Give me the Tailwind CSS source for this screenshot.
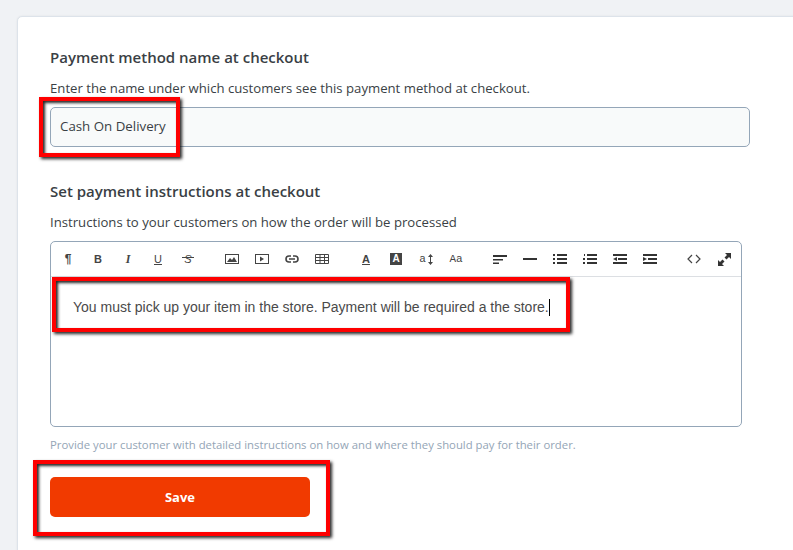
<!DOCTYPE html>
<html>
<head>
  <meta charset="UTF-8">
  <meta name="viewport" content="width=device-width, initial-scale=1.0">
  <script src="https://cdn.jsdelivr.net/npm/@tailwindcss/browser@4"></script>
</head>
<body class="bg-[#f0f2f5] h-[550px] overflow-hidden relative font-['Open_Sans',sans-serif]">
  <div class="pt-[16px] pl-[17px]">
    <!-- Card -->
    <div class="bg-white border border-[#dde3ea] rounded-tl-[5px] w-[800px] h-[560px] pl-[32px] pt-[30px] text-[#3a3f45] shadow-[0_0_2px_rgba(0,0,0,0.08)]">
      <h2 class="text-[15px] leading-[20px] font-semibold">Payment method name at checkout</h2>
      <p class="text-[13.16px] leading-[18px] mt-[12px]">Enter the name under which customers see this payment method at checkout.</p>
      <div class="mt-[10px] w-[700px] h-[40px] bg-[#f8fafa] border border-[#94a6b8] rounded-[5px] pl-[9px] flex items-center text-[13.3px]">Cash On Delivery</div>

      <h2 class="text-[15px] leading-[20px] font-semibold mt-[34px]">Set payment instructions at checkout</h2>
      <p class="text-[13.16px] leading-[18px] mt-[12px]">Instructions to your customers on how the order will be processed</p>

      <!-- Editor -->
      <div class="mt-[10px] w-[692px] h-[186px] border border-[#94a6b8] rounded-[5px] overflow-hidden">
        <div class="h-[35px] border-b border-[#dcdfe3] pl-[2px] flex items-center text-[#444] font-['Liberation_Sans',sans-serif] text-[11px]">
          <span class="w-[30px] text-center font-bold text-[12px]">¶</span>
          <span class="w-[30px] text-center font-bold">B</span>
          <span class="w-[30px] text-center font-bold italic font-['Liberation_Serif',serif] text-[12px]">I</span>
          <span class="w-[30px] text-center underline">U</span>
          <span class="w-[30px] flex justify-center"><span class="relative w-[12px] text-center italic">S<span class="absolute left-0 top-[6px] w-[12px] h-px bg-[#444]"></span></span></span>

          <span class="w-[30px] ml-[14px] flex justify-center">
            <svg width="14" height="10" viewBox="0 0 14 10"><rect x=".5" y=".5" width="13" height="9" fill="none" stroke="#444"/><path d="M2 8l3-4 2 2 2-3 3 5z" fill="#444"/></svg>
          </span>
          <span class="w-[30px] flex justify-center">
            <svg width="14" height="10" viewBox="0 0 14 10"><rect x=".5" y=".5" width="13" height="9" fill="none" stroke="#444"/><path d="M5 2.500l4 2.500-4 2.500z" fill="#444"/></svg>
          </span>
          <span class="w-[30px] flex justify-center">
            <svg width="14" height="8" viewBox="0 0 14 8" fill="none" stroke="#444" stroke-width="1.6"><path d="M6 1H4a3 3 0 0 0 0 6h2M8 1h2a3 3 0 0 1 0 6H8M4 4h6"/></svg>
          </span>
          <span class="w-[30px] flex justify-center">
            <svg width="14" height="10" viewBox="0 0 14 10" fill="none" stroke="#444"><path d="M.5.5h13v9H.5zM.5 3.500h13M.5 6.500h13M5 .5v9M9.500 .5v9"/></svg>
          </span>

          <span class="w-[30px] ml-[14px] text-center font-bold underline">A</span>
          <span class="w-[30px] flex justify-center"><span class="w-[12px] h-[12px] bg-[#444] text-white font-bold text-[10px] leading-[12px] text-center">A</span></span>
          <span class="w-[30px] flex justify-center items-center gap-[2px]">
            <span class="font-['Liberation_Mono',monospace]">a</span>
            <svg width="5" height="11" viewBox="0 0 5 11" fill="#444"><path d="M2.500 0L5 3H3v5h2l-2.500 3L0 8h2V3H0z"/></svg>
          </span>
          <span class="w-[30px] text-center font-['Liberation_Mono',monospace]">Aa</span>

          <span class="w-[30px] ml-[14px] flex justify-center">
            <svg width="14" height="9" viewBox="0 0 14 9" fill="#333"><path d="M0 0h14v2H0zM0 4h10v1.500H0zM0 7.500h6V9H0z"/></svg>
          </span>
          <span class="w-[30px] flex justify-center">
            <svg width="14" height="2" viewBox="0 0 14 2" fill="#333"><path d="M0 0h14v2H0z"/></svg>
          </span>
          <span class="w-[30px] flex justify-center">
            <svg width="14" height="10" viewBox="0 0 14 10" fill="#333"><path d="M0 0h2v2H0zM4 0h10v2H4zM0 4h2v2H0zM4 4h10v2H4zM0 8h2v2H0zM4 8h10v2H4z"/></svg>
          </span>
          <span class="w-[30px] flex justify-center">
            <svg width="14" height="10" viewBox="0 0 14 10" fill="#333"><path d="M1 0h1v2H1zM4 0h10v2H4zM0 4h2v2H0zM4 4h10v2H4zM0 8h2v2H0zM4 8h10v2H4z" /></svg>
          </span>
          <span class="w-[30px] flex justify-center">
            <svg width="14" height="10" viewBox="0 0 14 10" fill="#333"><path d="M0 0h14v2H0zM5 4h9v2H5zM0 8h14v2H0zM4 3v4L0 5z"/></svg>
          </span>
          <span class="w-[30px] flex justify-center">
            <svg width="14" height="10" viewBox="0 0 14 10" fill="#333"><path d="M0 0h14v2H0zM5 4h9v2H5zM0 8h14v2H0zM0 3v4l4-2z"/></svg>
          </span>

          <span class="w-[30px] ml-[14px] flex justify-center">
            <svg width="14" height="10" viewBox="0 0 14 10" fill="none" stroke="#444" stroke-width="1.200"><path d="M5 1L1 5l4 4M9 1l4 4-4 4"/></svg>
          </span>
          <span class="w-[30px] flex justify-center">
            <svg width="13" height="13" viewBox="0 0 13 13" fill="#333"><path d="M7 0h6v6l-2-2-2.500 2.500-2-2L9 2zM0 7l2 2 2.500-2.500 2 2L4 11l2 2H0z"/></svg>
          </span>
        </div>
        <div class="pl-[22px] pt-[20px] text-[14px] leading-[20px] text-[#4a4a4a] font-['Liberation_Sans',sans-serif] flex items-center">You must pick up your item in the store. Payment will be required a the store.<span class="inline-block w-px h-[17px] bg-black"></span></div>
      </div>

      <p class="text-[11.33px] leading-[16px] mt-[10px] text-[#94a5b6]">Provide your customer with detailed instructions on how and where they should pay for their order.</p>

      <button class="mt-[24px] w-[260px] h-[40px] pt-px bg-[#f13a00] rounded-[5px] text-white text-[13px] font-bold">Save</button>
    </div>
  </div>

  <!-- Red annotation boxes drawn over the screenshot -->
  <div class="absolute left-[39px] top-[97px] w-[141px] h-[60px] border-[4px] border-[#fe0000] shadow-[2px_2px_3px_rgba(0,0,0,0.85),inset_2px_2px_3px_rgba(0,0,0,0.85)]"></div>
  <div class="absolute left-[52px] top-[277px] w-[518px] h-[55px] border-[4px] border-[#fe0000] shadow-[2px_2px_3px_rgba(0,0,0,0.85),inset_2px_2px_3px_rgba(0,0,0,0.85)]"></div>
  <div class="absolute left-[33px] top-[460px] w-[297px] h-[76px] border-[4px] border-[#fe0000] shadow-[2px_2px_3px_rgba(0,0,0,0.85),inset_2px_2px_3px_rgba(0,0,0,0.85)]"></div>
</body>
</html>
